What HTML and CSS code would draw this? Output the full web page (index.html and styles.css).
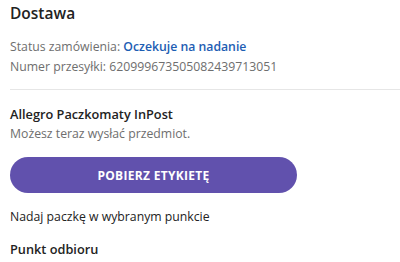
FILE: index.html
```html
<!DOCTYPE html>
<html lang="pl">
<head>
<meta charset="utf-8">
<link rel="stylesheet" href="styles.css">
</head>
<body>
<div class="panel">
  <h2 class="title">Dostawa</h2>
  <div class="info">
    <p class="line">Status zamówienia: <span class="status">Oczekuje na nadanie</span></p>
    <p class="line">Numer przesyłki: 620999673505082439713051</p>
  </div>
  <hr class="divider">
  <h3 class="carrier">Allegro Paczkomaty InPost</h3>
  <p class="line">Możesz teraz wysłać przedmiot.</p>
  <button class="btn">POBIERZ ETYKIETĘ</button>
  <p class="plain">Nadaj paczkę w wybranym punkcie</p>
  <h3 class="carrier point">Punkt odbioru</h3>
</div>
</body>
</html>
```
FILE: styles.css
```css
html, body {
  margin: 0;
  padding: 0;
  background: #fff;
}
body {
  font-family: "Open Sans", "Noto Sans", sans-serif;
  color: #222;
}
.panel {
  padding: 3px 0 0 10px;
  display: flex;
  flex-direction: column;
}
.title {
  margin: 0;
  font-size: 15.5px;
  font-weight: 600;
  line-height: 20px;
}
.info {
  margin-top: 14px;
  display: flex;
  flex-direction: column;
}
.line {
  margin: 0;
  font-size: 12.25px;
  line-height: 20px;
  color: #6e6e6e;
}
.status {
  color: #1d5db3;
  font-weight: 600;
}
.divider {
  margin: 12px 0 0 0;
  border: 0;
  border-top: 1px solid #e6e6e6;
  height: 0;
}
.carrier {
  margin: 14px 0 0 0;
  font-size: 12.75px;
  font-weight: 600;
  line-height: 20px;
  color: #222;
}
.btn {
  margin-top: 13px;
  width: 287px;
  height: 36px;
  border: 0;
  border-radius: 18px;
  background: #6151ad;
  color: #fff;
  font-family: "Open Sans", "Noto Sans", sans-serif;
  font-size: 12px;
  font-weight: 700;
  letter-spacing: 0.3px;
  padding: 0;
}
.plain {
  margin: 14px 0 0 0;
  font-size: 12.25px;
  line-height: 20px;
  color: #222;
}
.point {
  margin-top: 12px;
}
```
